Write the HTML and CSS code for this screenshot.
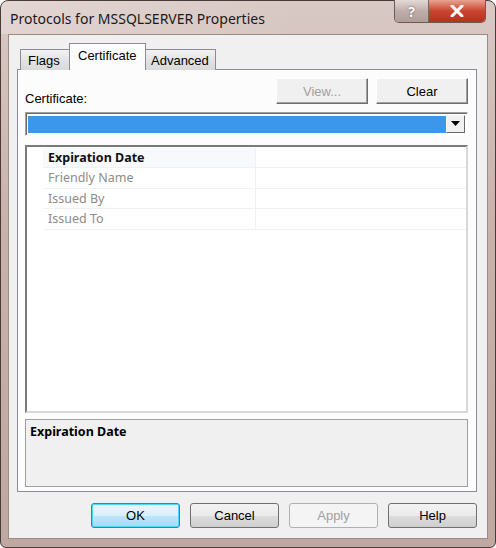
FILE: index.html
```html
<!DOCTYPE html>
<html lang="en">
<head>
    <meta charset="UTF-8">
    <title>Protocols for MSSQLSERVER Properties</title>
    <link rel="stylesheet" href="styles.css">
</head>
<body>

<div class="window">
    <!-- title bar -->
    <div class="titlebar">
        <span class="title">Protocols for MSSQLSERVER Properties</span>
        <div class="caption-buttons">
            <div class="cap-btn help-cap">?</div>
            <div class="cap-btn close-cap">
                <svg width="14" height="12" viewBox="0 0 14 12">
                    <path d="M2 1 L12 11 M12 1 L2 11" stroke="#fff" stroke-width="3" stroke-linecap="round"/>
                </svg>
            </div>
        </div>
    </div>

    <div class="client">
        <!-- tabs -->
        <div class="tabs">
            <div class="tab tab-flags">Flags</div>
            <div class="tab tab-cert selected">Certificate</div>
            <div class="tab tab-adv">Advanced</div>
        </div>

        <div class="panel">
            <div class="cert-row">
                <span class="cert-label">Certificate:</span>
                <div class="cert-buttons">
                    <button class="btn disabled">View...</button>
                    <button class="btn">Clear</button>
                </div>
            </div>

            <div class="combo">
                <div class="combo-value"></div>
                <div class="combo-drop">
                    <svg width="9" height="5" viewBox="0 0 9 5"><path d="M0 0 L9 0 L4.5 5 Z" fill="#000"/></svg>
                </div>
            </div>

            <div class="listbox">
                <div class="prop-row">
                    <div class="prop-name active">Expiration Date</div>
                    <div class="prop-value"></div>
                </div>
                <div class="prop-row">
                    <div class="prop-name">Friendly Name</div>
                    <div class="prop-value"></div>
                </div>
                <div class="prop-row">
                    <div class="prop-name">Issued By</div>
                    <div class="prop-value"></div>
                </div>
                <div class="prop-row">
                    <div class="prop-name">Issued To</div>
                    <div class="prop-value"></div>
                </div>
            </div>

            <div class="description">
                <div class="desc-title">Expiration Date</div>
            </div>
        </div>

        <!-- dialog buttons -->
        <div class="dialog-buttons">
            <button class="btn dlg default">OK</button>
            <button class="btn dlg">Cancel</button>
            <button class="btn dlg disabled">Apply</button>
            <button class="btn dlg">Help</button>
        </div>
    </div>
</div>

</body>
</html>
```

FILE: styles.css
```css
body {
    margin: 0;
    background: #ffffff;
    font-family: 'Liberation Sans', Arial, sans-serif;
    font-size: 13px;
}
.window {
    width: 496px;
    height: 548px;
    box-sizing: border-box;
    display: flex;
    flex-direction: column;
    background: linear-gradient(to bottom, #d9c9c5 0%, #c8b2ac 40%, #bfa8a2 100%);
    border: 1px solid #4a3b38;
    border-radius: 8px 8px 6px 6px;
}
.titlebar {
    height: 33px;
    display: flex;
    align-items: center;
    justify-content: space-between;
    padding-left: 9px;
    background: linear-gradient(to right, rgba(255,255,255,0.25), rgba(255,255,255,0) 60%);
    border-radius: 7px 7px 0 0;
}
.title {
    font-family: 'Noto Sans', sans-serif;
    font-size: 14px;
    color: #1a1a1a;
    margin-top: 1px;
}
.caption-buttons {
    align-self: flex-start;
    display: flex;
    margin-right: 9px;
    margin-top: -1px;
    border: 1px solid #6d5a56;
    border-top: none;
    border-radius: 0 0 5px 5px;
    overflow: hidden;
}
.cap-btn {
    height: 22px;
    display: flex;
    align-items: center;
    justify-content: center;
}
.help-cap {
    width: 33px;
    background: linear-gradient(to bottom, #e4d9d6, #bfaeaa 50%, #b09d98);
    border-right: 1px solid #7a6864;
    font-family: 'Noto Sans', sans-serif;
    font-weight: bold;
    font-size: 14px;
    color: #ffffff;
    text-shadow: 0 0 2px #4a4a4a;
}
.close-cap {
    width: 56px;
    background: linear-gradient(to bottom, #e8a393, #c8452f 50%, #b8301c);
}
.client {
    flex: 1;
    margin: 0 7px 8px 7px;
    background: #f0f0f0;
    border: 1px solid #9c8a86;
    padding: 8px 10px 0 8px;
    display: flex;
    flex-direction: column;
}
.tabs {
    display: flex;
    align-items: flex-end;
    height: 27px;
    padding-left: 3px;
    margin-bottom: -1px;
    position: relative;
    z-index: 1;
}
.tab {
    height: 21px;
    line-height: 22px;
    box-sizing: border-box;
    border: 1px solid #898c95;
    border-bottom: none;
    background: linear-gradient(to bottom, #f2f2f2, #e3e3e3 50%, #d9d9d9);
    color: #000;
}
.tab-flags {
    width: 50px;
    padding-left: 7px;
}
.tab-cert {
    width: 77px;
    padding-left: 8px;
    margin-left: -1px;
}
.tab-adv {
    width: 71px;
    padding-left: 5px;
    margin-left: -1px;
}
.tab.selected {
    height: 27px;
    line-height: 24px;
    background: #fcfcfc;
    position: relative;
    z-index: 2;
}
.panel {
    height: 423px;
    box-sizing: border-box;
    border: 1px solid #898c95;
    background: #fcfcfc;
    padding: 8px 8px 4px 7px;
    display: flex;
    flex-direction: column;
}
.cert-row {
    display: flex;
    justify-content: space-between;
    align-items: flex-end;
    height: 26px;
}
.cert-label {
    margin-bottom: -2px;
}
.cert-buttons {
    display: flex;
    gap: 8px;
}
.btn {
    width: 92px;
    height: 26px;
    font-family: 'Liberation Sans', Arial, sans-serif;
    font-size: 13px;
    color: #000;
    background: #f0f0f0;
    border: 1px solid;
    border-color: #ffffff #6e6e6e #6e6e6e #ffffff;
    box-shadow: inset -1px -1px 0 #a0a0a0;
    padding: 0;
}
.btn.disabled {
    color: #a0a0a0;
}
.combo {
    margin-top: 8px;
    height: 24px;
    box-sizing: border-box;
    border: 1px solid;
    border-color: #a0a0a0 #ffffff #ffffff #a0a0a0;
    box-shadow: inset 1px 1px 0 #696969;
    display: flex;
    padding: 3px 2px 2px 2px;
    background: #ffffff;
}
.combo-value {
    flex: 1;
    background: #3c96ea;
}
.combo-drop {
    width: 19px;
    margin-top: -1px;
    background: #f0f0f0;
    border: 1px solid;
    border-color: #f8f8f8 #696969 #696969 #f8f8f8;
    box-sizing: border-box;
    display: flex;
    align-items: center;
    justify-content: center;
}
.listbox {
    margin-top: 9px;
    height: 270px;
    box-sizing: border-box;
    border: 2px solid;
    border-color: #7a7a7a #d8d8d8 #d8d8d8 #7a7a7a;
    background: #ffffff;
    padding-top: 1px;
    font-family: 'Noto Sans', sans-serif;
    font-size: 12.5px;
}
.prop-row {
    display: flex;
    height: 20.5px;
    box-sizing: border-box;
    margin-left: 16px;
    border-bottom: 1px solid #f1f1f1;
}
.prop-name {
    width: 207px;
    padding-left: 5px;
    line-height: 20px;
    color: #8c8c8c;
    border-right: 1px solid #f1f1f1;
}
.prop-name.active {
    color: #111;
    font-weight: bold;
    background: #f7f9fc;
}
.prop-value {
    flex: 1;
}
.description {
    margin-top: 6px;
    height: 68px;
    box-sizing: border-box;
    border: 1px solid #a0a0a0;
    background: #f0f0f0;
    padding: 3px 4px;
}
.desc-title {
    font-family: 'Noto Sans', sans-serif;
    font-weight: bold;
    font-size: 12.5px;
    color: #000;
}
.dialog-buttons {
    display: flex;
    justify-content: flex-end;
    gap: 10px;
    margin-top: 11px;
}
.btn.dlg {
    width: 89px;
    height: 25px;
    border: 1px solid #707070;
    border-radius: 3px;
    box-shadow: none;
    background: linear-gradient(to bottom, #f2f2f2 0%, #ebebeb 50%, #dddddd 51%, #cfcfcf 100%);
}
.btn.dlg.default {
    border-color: #3c7fb1;
    box-shadow: inset 0 0 0 1px #48d8fb;
    background: linear-gradient(to bottom, #eaf6fd 0%, #d9f0fc 50%, #bee6fd 51%, #a7d9f5 100%);
}
.btn.dlg.disabled {
    border-color: #adb2b5;
    background: #f4f4f4;
    color: #a0a0a0;
}
```
